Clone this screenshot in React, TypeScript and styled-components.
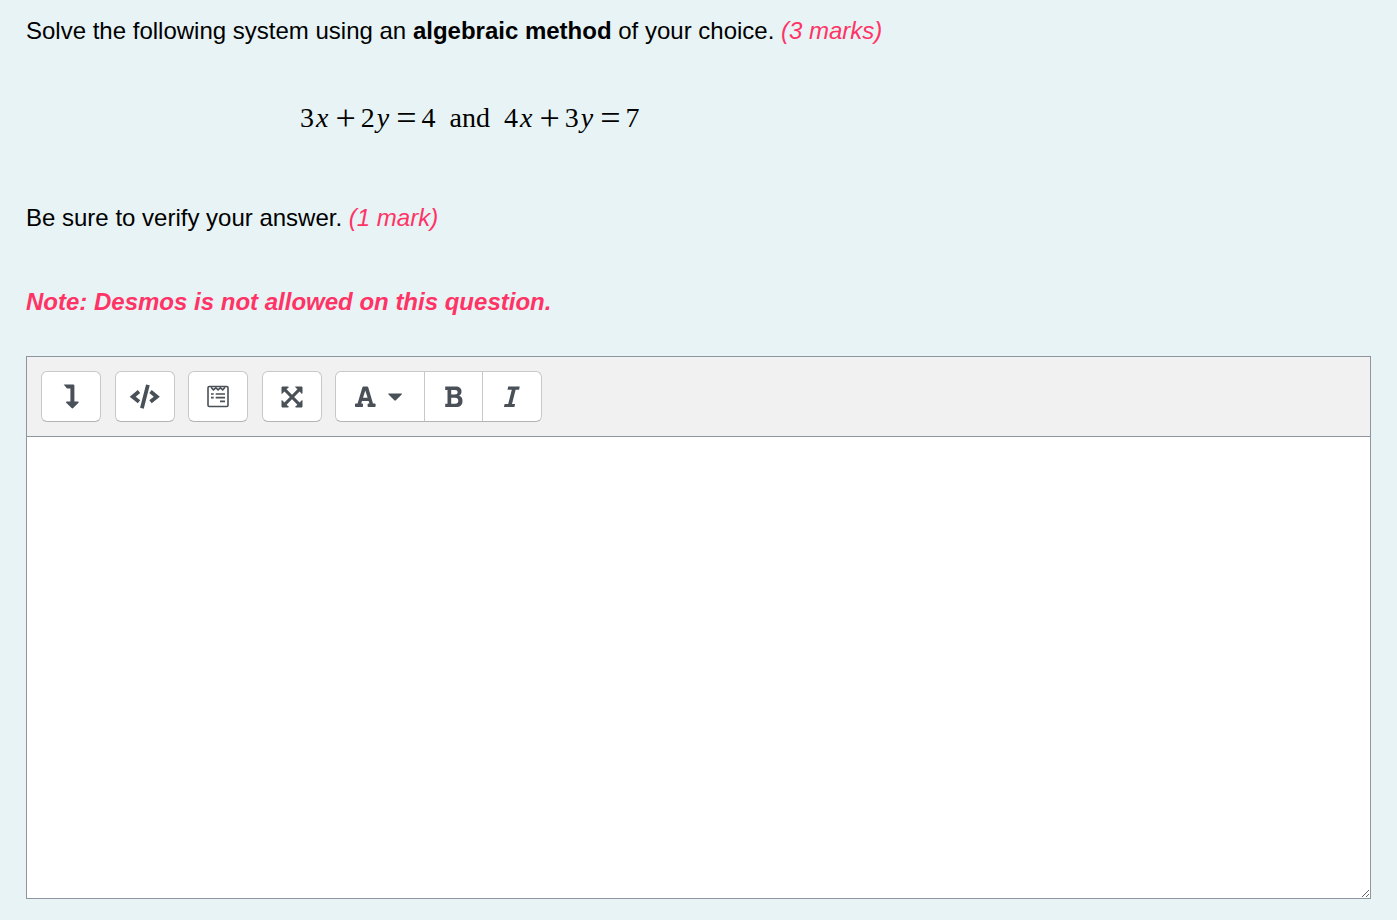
import React from "react";
import styled, { createGlobalStyle } from "styled-components";

const GlobalStyle = createGlobalStyle`
  *, *::before, *::after { box-sizing: border-box; }
  body {
    margin: 0;
    background: #e7f3f5;
    color: #000;
    font: 24px/36px "Liberation Sans", Arial, sans-serif;
  }
`;

const Question = styled.main`
  padding: 13px 26px 21px;
`;

const Prompt = styled.p<{ $gap: number }>`
  margin: 0 0 ${(p) => p.$gap}px;
`;

const Marks = styled.em`
  color: #ff3366;
`;

const Note = styled.strong`
  color: #ff3366;
  font-style: italic;
`;

const Equation = styled.div`
  display: flex;
  align-items: center;
  margin: 0 0 64px 274px;
  font: 28px/36px "Liberation Serif", "Times New Roman", serif;
`;

const Variable = styled.i`
  margin: 0 2px;
`;

const Operator = styled.span`
  margin: 0 5px;
  font-size: 36px;
`;

const Word = styled.span`
  margin: 0 14px;
`;

const Editor = styled.section`
  border: 1px solid #8f959e;
  background: #fff;
`;

const Toolbar = styled.div`
  padding: 14px;
  border-bottom: 1px solid #8f959e;
  background: #f1f1f1;
`;

const Tools = styled.div`
  display: flex;
  justify-content: space-between;
  width: 501px;
  max-width: 100%;
`;

const Group = styled.div`
  display: flex;
  height: 51px;
  overflow: hidden;
  border: 1px solid #c8c8c8;
  border-bottom-color: #b3b3b3;
  border-radius: 6px;
  background: #fff;
`;

const ToolButton = styled.button<{ $wide?: boolean }>`
  display: flex;
  align-items: center;
  justify-content: center;
  width: ${(p) => (p.$wide ? 88 : 58)}px;
  padding: 0;
  border: 0;
  background: none;
  color: #495057;
  cursor: pointer;

  & + & {
    width: 58px;
    border-left: 1px solid #c8c8c8;
  }

  & + &:last-child {
    width: 59px;
  }
`;

const Answer = styled.textarea`
  display: block;
  width: 100%;
  height: 461px;
  padding: 12px;
  border: 0;
  outline: 0;
  resize: vertical;
  background: #fff;
  color: #000;
  font: inherit;
`;

const Icon = ({ children, width = 32 }: { children: React.ReactNode; width?: number }) => (
  <svg width={width} height="28" viewBox={`0 0 ${width} 28`} fill="currentColor" aria-hidden="true">
    {children}
  </svg>
);

const DownIcon = () => (
  <Icon>
    <path d="M8.7 1.6H18.2Q19.4 1.6 19.4 2.8V18.4H23Q24.3 18.7 23.5 19.8L18.2 25.1Q17.4 25.8 16.6 25.1L11.2 19.8Q10.5 18.7 11.7 18.4H15.4V5.4H12Z" />
  </Icon>
);

const CodeIcon = () => (
  <Icon>
    <path
      d="M10 8.6 3.7 13.7l6.3 5.1M21.5 8.6l6.3 5.1-6.3 5.1M18.9 1.9l-6 23.3"
      fill="none"
      stroke="currentColor"
      strokeWidth="3.8"
    />
  </Icon>
);

const EquationIcon = () => (
  <Icon>
    <g fill="none" stroke="currentColor" strokeWidth="1.6">
      <rect x="6" y="3.5" width="20" height="20" rx="1.2" />
      <path d="M9 4.2l2.4 2.6 2.5-2 2.2 2 2.2-2 2.5 2L23 4.2" />
      <path d="M9 11h2.7M13.7 11H23M9 14.6h2.7M13.7 14.6H23M18 18.4h5" />
    </g>
  </Icon>
);

const ExpandIcon = () => (
  <Icon>
    <path d="M9 6.9l14 14.2M23 6.9L9 21.1" fill="none" stroke="currentColor" strokeWidth="3" />
    <path
      d="M6 4h6.4L6 10.4zM26 4v6.4L19.6 4zM6 24v-6.4l6.4 6.4zM26 24h-6.4l6.4-6.4z"
      stroke="currentColor"
      strokeLinejoin="round"
    />
  </Icon>
);

const StyleIcon = () => (
  <Icon width={50}>
    <path
      fillRule="evenodd"
      d="M8.4 3.5h3.8q.8 0 1 .8L18 20.5h1.8q.8 0 .8.8v2q0 .8-.8.8h-6.4q-.8 0-.8-.8v-2q0-.8.8-.8h1l-.8-2.6H7l-.8 2.6h1q.8 0 .8.8v2q0 .8-.8.8H.8q-.8 0-.8-.8v-2q0-.8.8-.8h1.8L7.4 4.3q.2-.8 1-.8zM10.3 7.4 8 14.7h4.6z"
    />
    <path d="M33.7 10.4h12.8q.8.2.2 1l-5.8 5.9q-.8.8-1.6 0l-5.8-5.9q-.6-.8.2-1z" />
  </Icon>
);

const BoldIcon = () => (
  <Icon>
    <path
      fillRule="evenodd"
      d="M7.2 3.5h10.3c4 0 6 2 6 5.1 0 2-.8 3.5-2.4 4.2 2.3.7 3.4 2.4 3.4 4.9 0 4-2.2 6.4-6.5 6.4H7.2v-3.4h2.3V7H7.2zM13.2 7v4.4h3.6c1.9 0 2.8-.7 2.8-2.2S18.7 7 17 7zm0 7.7v6h4c2 0 3.1-1 3.1-3s-1.1-3-3.1-3z"
    />
  </Icon>
);

const ItalicIcon = () => (
  <Icon>
    <path d="M12.2 3.5h11.5l-.6 3.2h-3.5l-3.6 14.2h3.1l-.7 3.2H7.9l.7-3.2h3.6L15.8 6.7h-4.3z" />
  </Icon>
);

export default function App() {
  return (
    <>
      <GlobalStyle />
      <Question>
        <Prompt $gap={51}>
          Solve the following system using an <b>algebraic method</b> of your choice. <Marks>(3 marks)</Marks>
        </Prompt>
        <Equation>
          <span>3</span><Variable>x</Variable><Operator>+</Operator>
          <span>2</span><Variable>y</Variable><Operator>=</Operator>
          <span>4</span><Word>and</Word>
          <span>4</span><Variable>x</Variable><Operator>+</Operator>
          <span>3</span><Variable>y</Variable><Operator>=</Operator>
          <span>7</span>
        </Equation>
        <Prompt $gap={48}>
          Be sure to verify your answer. <Marks>(1 mark)</Marks>
        </Prompt>
        <Prompt $gap={36}>
          <Note>Note: Desmos is not allowed on this question.</Note>
        </Prompt>
        <Editor>
          <Toolbar role="toolbar" aria-label="Text formatting">
            <Tools>
              <Group><ToolButton type="button" aria-label="Show more buttons"><DownIcon /></ToolButton></Group>
              <Group><ToolButton type="button" aria-label="HTML"><CodeIcon /></ToolButton></Group>
              <Group><ToolButton type="button" aria-label="Equation editor"><EquationIcon /></ToolButton></Group>
              <Group><ToolButton type="button" aria-label="Full screen"><ExpandIcon /></ToolButton></Group>
              <Group>
                <ToolButton type="button" $wide aria-label="Paragraph styles"><StyleIcon /></ToolButton>
                <ToolButton type="button" aria-label="Bold"><BoldIcon /></ToolButton>
                <ToolButton type="button" aria-label="Italic"><ItalicIcon /></ToolButton>
              </Group>
            </Tools>
          </Toolbar>
          <Answer aria-label="Answer" />
        </Editor>
      </Question>
    </>
  );
}
